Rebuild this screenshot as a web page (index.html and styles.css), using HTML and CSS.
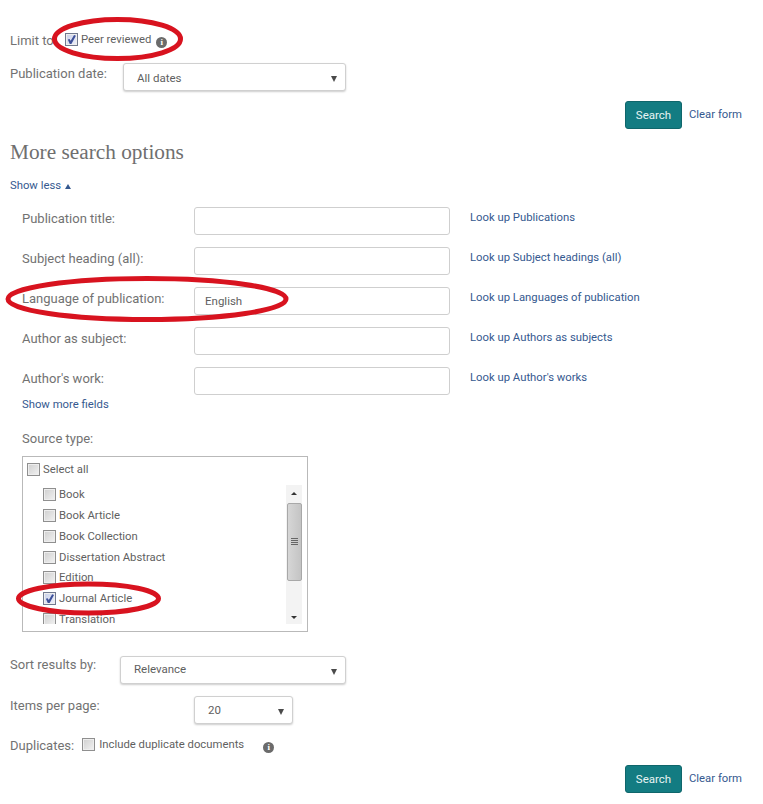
FILE: index.html
```html
<!DOCTYPE html>
<html lang="en">
<head>
    <meta charset="UTF-8">
    <meta name="viewport" content="width=device-width, initial-scale=1.0">
    <title>Advanced search</title>
    <link rel="stylesheet" href="styles.css">
</head>
<body>
    <form class="search-form">
        <div class="limit-row">
            <span class="label">Limit to:</span>
            <label class="check-label"><input type="checkbox" class="check check-peer" checked> Peer reviewed</label>
            <span class="info info-peer">i</span>
        </div>

        <div class="date-row">
            <label class="label">Publication date:</label>
            <div class="select-wrap date-select"><select><option>All dates</option></select></div>
        </div>

        <div class="actions actions-top">
            <button type="button" class="search-btn">Search</button>
            <a href="#" class="link">Clear form</a>
        </div>

        <h2 class="section-title">More search options</h2>
        <a href="#" class="link show-less">Show less <span class="up-arrow"></span></a>

        <div class="fields">
            <div class="field-row">
                <label class="label">Publication title:</label>
                <input type="text" class="text-input">
                <a href="#" class="link">Look up Publications</a>
            </div>
            <div class="field-row">
                <label class="label">Subject heading (all):</label>
                <input type="text" class="text-input">
                <a href="#" class="link">Look up Subject headings (all)</a>
            </div>
            <div class="field-row">
                <label class="label">Language of publication:</label>
                <input type="text" class="text-input" value="English">
                <a href="#" class="link">Look up Languages of publication</a>
            </div>
            <div class="field-row">
                <label class="label">Author as subject:</label>
                <input type="text" class="text-input">
                <a href="#" class="link">Look up Authors as subjects</a>
            </div>
            <div class="field-row">
                <label class="label">Author's work:</label>
                <input type="text" class="text-input">
                <a href="#" class="link">Look up Author's works</a>
            </div>
            <a href="#" class="link show-more">Show more fields</a>

            <div class="label source-label">Source type:</div>
            <div class="source-box">
                <label class="check-label select-all"><input type="checkbox" class="check"> Select all</label>
                <div class="source-scroll">
                    <div class="source-list">
                        <label class="check-label"><input type="checkbox" class="check"> Book</label>
                        <label class="check-label"><input type="checkbox" class="check"> Book Article</label>
                        <label class="check-label"><input type="checkbox" class="check"> Book Collection</label>
                        <label class="check-label"><input type="checkbox" class="check"> Dissertation Abstract</label>
                        <label class="check-label"><input type="checkbox" class="check"> Edition</label>
                        <label class="check-label"><input type="checkbox" class="check" checked> Journal Article</label>
                        <label class="check-label"><input type="checkbox" class="check"> Translation</label>
                    </div>
                    <div class="scrollbar">
                        <span class="arrow-up"></span>
                        <div class="thumb"><span class="grip"></span></div>
                        <span class="arrow-down"></span>
                    </div>
                </div>
            </div>
        </div>

        <div class="sort-row">
            <label class="label">Sort results by:</label>
            <div class="select-wrap sort-select"><select><option>Relevance</option></select></div>
        </div>
        <div class="items-row">
            <label class="label">Items per page:</label>
            <div class="select-wrap items-select"><select><option>20</option></select></div>
        </div>
        <div class="dup-row">
            <span class="label">Duplicates:</span>
            <label class="check-label"><input type="checkbox" class="check"> Include duplicate documents</label>
            <span class="info info-dup">i</span>
        </div>

        <div class="actions actions-bottom">
            <button type="button" class="search-btn">Search</button>
            <a href="#" class="link">Clear form</a>
        </div>
    </form>

    <!-- red hand-drawn rings on top of the form -->
    <svg class="rings" width="763" height="804" viewBox="0 0 763 804">
        <ellipse cx="117.5" cy="39" rx="63" ry="19.5"/>
        <ellipse cx="147" cy="299" rx="139" ry="20.5"/>
        <ellipse cx="88.5" cy="598.5" rx="70" ry="14.5"/>
    </svg>
</body>
</html>
```

FILE: styles.css
```css
* {
    margin: 0;
    padding: 0;
    box-sizing: border-box;
}

body {
    position: relative;
    width: 763px;
    height: 804px;
    overflow: hidden;
    background: #fff;
    font-family: Roboto, 'Liberation Sans', sans-serif;
    color: #666;
}

.search-form {
    padding: 0 21px 0 10px;
}

.label {
    font-size: 13px;
    color: #727272;
}

.link {
    font-size: 11.3px;
    color: #35598f;
    text-decoration: none;
}

.check-label {
    display: flex;
    align-items: center;
    gap: 3px;
    font-size: 11.3px;
    color: #5f5f5f;
    white-space: nowrap;
}

.check {
    appearance: none;
    position: relative;
    flex: none;
    width: 13px;
    height: 13px;
    border: 1px solid #8f8f8f;
    background: linear-gradient(135deg, #cfcfcf 0%, #f2f2f2 100%);
    box-shadow: inset 0 0 0 1px #eee;
}

.check:checked {
    background: linear-gradient(135deg, #c9d0e8 0%, #eef0fa 100%);
    border-color: #71798f;
}

.check:checked::before {
    content: '';
    position: absolute;
    inset: 1px;
    background: #3d5099;
    clip-path: polygon(10% 50%, 30% 45%, 42% 65%, 80% 0, 100% 8%, 50% 100%, 32% 100%);
}

.info {
    display: inline-flex;
    align-items: center;
    justify-content: center;
    width: 11px;
    height: 11px;
    border-radius: 50%;
    background: #6b6b6b;
    color: #fff;
    font-family: 'Liberation Serif', serif;
    font-size: 9px;
    font-weight: bold;
}

.limit-row {
    display: flex;
    align-items: center;
    height: 26px;
    margin-top: 27px;
    position: relative;
}

.limit-row .check-label {
    margin-left: 8px;
    margin-top: -1px;
}

.info-peer {
    margin-left: 5px;
    margin-top: 4px;
}

.date-row {
    display: flex;
    align-items: flex-start;
    margin-top: 10px;
}

.date-row .label {
    width: 113px;
    padding-top: 3px;
}

.select-wrap {
    position: relative;
    height: 28px;
    border: 1px solid #d0d0d0;
    border-radius: 3px;
    background: #fff;
    box-shadow: 0 1px 2px rgba(0,0,0,0.2);
}

.select-wrap::after {
    content: '';
    position: absolute;
    right: 8px;
    top: 12px;
    border-left: 3px solid transparent;
    border-right: 3px solid transparent;
    border-top: 6px solid #4a4a4a;
}

.select-wrap select {
    appearance: none;
    width: 100%;
    height: 100%;
    border: none;
    background: transparent;
    padding-left: 13px;
    font-family: inherit;
    font-size: 11.5px;
    color: #5f5f5f;
}

.date-select {
    width: 223px;
}

.date-select select {
    padding-top: 2px;
}

.sort-select select {
    padding-bottom: 2px;
}

.actions {
    display: flex;
    align-items: center;
    justify-content: flex-end;
    gap: 7px;
}

.actions .link {
    margin-top: -2px;
}

.actions-top {
    margin-top: 10px;
}

.search-btn {
    width: 57px;
    height: 28px;
    background: #137c82;
    border: 1px solid #0f666b;
    border-radius: 3px;
    color: #e8f4f4;
    font-family: inherit;
    font-size: 11.5px;
}

.section-title {
    margin-top: 11px;
    font-family: 'Liberation Serif', serif;
    font-size: 21.3px;
    font-weight: normal;
    line-height: 24px;
    color: #6f6f6f;
}

.show-less {
    display: flex;
    align-items: center;
    gap: 4px;
    margin-top: 15px;
    line-height: 14px;
}

.up-arrow {
    border-left: 3px solid transparent;
    border-right: 3px solid transparent;
    border-bottom: 5px solid #35598f;
}

.fields {
    margin-top: 14px;
    padding-left: 12px;
}

.field-row {
    display: flex;
    align-items: flex-start;
    height: 28px;
    margin-bottom: 12px;
}

.field-row .label {
    width: 172px;
    padding-top: 4px;
}

.field-row .link {
    margin-left: 20px;
    padding-top: 4px;
}

.text-input {
    width: 256px;
    height: 28px;
    border: 1px solid #cfcfcf;
    border-radius: 3px;
    padding-left: 10px;
    font-family: inherit;
    font-size: 11.5px;
    color: #5f5f5f;
}

.show-more {
    display: block;
    margin-top: -9px;
    line-height: 14px;
}

.source-label {
    margin-top: 19px;
    line-height: 16px;
}

.source-box {
    width: 286px;
    height: 176px;
    margin-top: 9px;
    border: 1px solid #b9b9b9;
    padding: 6px 5px 0 4px;
}

.select-all {
    height: 13px;
}

.source-scroll {
    display: flex;
    justify-content: space-between;
    height: 139px;
    margin-top: 9px;
    overflow: hidden;
}

.source-list {
    display: flex;
    flex-direction: column;
    gap: 7.85px;
    padding: 3px 0 0 16px;
}

.source-list .check-label {
    height: 13px;
}

.scrollbar {
    display: flex;
    flex-direction: column;
    align-items: center;
    justify-content: space-between;
    width: 16px;
    background: #f3f3f3;
    padding: 7px 0 5px;
}

.arrow-up {
    border-left: 3px solid transparent;
    border-right: 3px solid transparent;
    border-bottom: 3px solid #333;
}

.arrow-down {
    border-left: 3px solid transparent;
    border-right: 3px solid transparent;
    border-top: 3px solid #333;
}

.thumb {
    display: flex;
    align-items: center;
    justify-content: center;
    width: 15px;
    height: 78px;
    margin-top: -2px;
    margin-bottom: 26px;
    background: linear-gradient(90deg, #d6d6d6, #c4c4c4);
    border: 1px solid #a8a8a8;
    border-radius: 2px;
}

.grip {
    width: 7px;
    height: 7px;
    background: repeating-linear-gradient(180deg, #666 0, #666 1px, transparent 1px, transparent 2px);
}

.sort-row {
    display: flex;
    align-items: flex-start;
    margin-top: 24px;
}

.sort-row .label {
    width: 110px;
    padding-top: 1px;
}

.sort-select {
    width: 226px;
}

.items-row {
    display: flex;
    align-items: flex-start;
    margin-top: 12px;
}

.items-row .label {
    width: 184px;
    padding-top: 2px;
}

.items-select {
    width: 99px;
}

.dup-row {
    display: flex;
    align-items: center;
    height: 16px;
    margin-top: 13px;
}

.dup-row .check-label {
    gap: 4px;
    margin-left: 8px;
    margin-top: -2px;
}

.info-dup {
    margin-left: 19px;
    margin-top: 4px;
}

.actions-bottom {
    margin-top: 12px;
}

.rings {
    position: absolute;
    top: 0;
    left: 0;
    pointer-events: none;
}

.rings ellipse {
    fill: none;
    stroke: #d8131f;
    stroke-width: 5;
}
```
